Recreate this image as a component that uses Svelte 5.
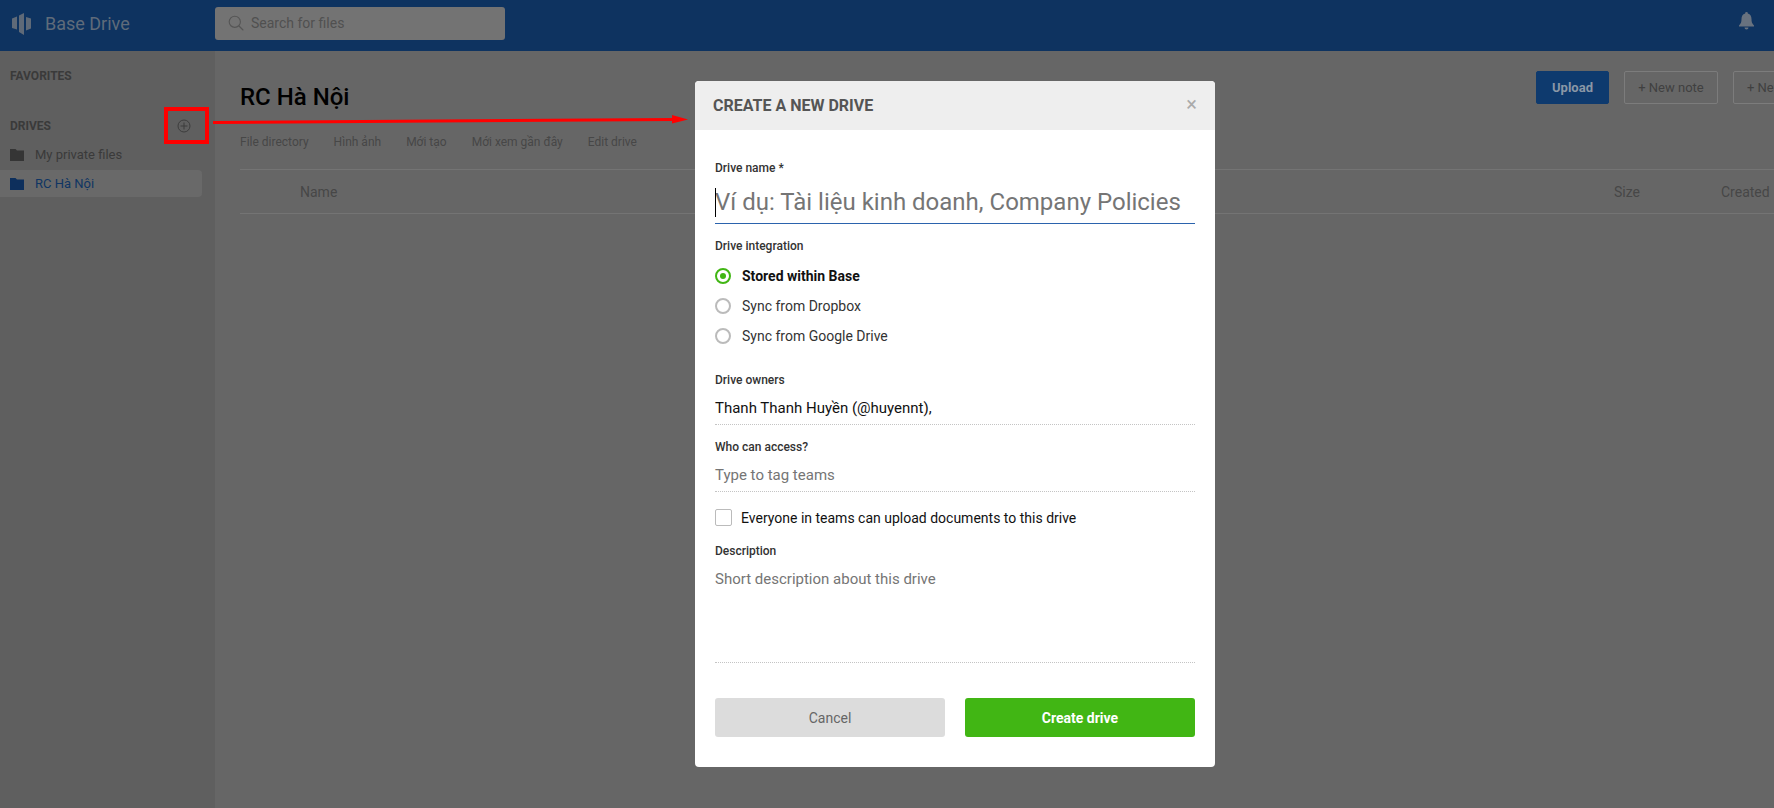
<script>
  const tabs = ['File directory', 'Hình ảnh', 'Mới tạo', 'Mới xem gần đây', 'Edit drive'];
  const radios = [
    { label: 'Stored within Base', on: true },
    { label: 'Sync from Dropbox', on: false },
    { label: 'Sync from Google Drive', on: false }
  ];
</script>

<div class="page">
  <header class="topbar">
    <div class="brand">
      <svg class="logo" width="19" height="22" viewBox="0 0 19 22" fill="#5f6a78">
        <path d="M0 5.500 5 3.500V16.500L0 15Z" />
        <path d="M7 2.500 12 0V22L7 19Z" />
        <path d="M14 4 19 5.500V15.500L14 17.500Z" />
      </svg>
      <span class="brand-name">Base Drive</span>
    </div>
    <div class="search">
      <svg width="16" height="16" viewBox="0 0 16 16" fill="none" stroke="#555" stroke-width="1.100">
        <circle cx="6.800" cy="6.800" r="5.600" />
        <path d="M11 11l4 4" stroke-linecap="round" />
      </svg>
      <span>Search for files</span>
    </div>
    <svg class="bell" width="15" height="18" viewBox="0 0 15 18" fill="#68727f">
      <path d="M7.500 0a1.300 1.300 0 0 1 1.300 1.500C11.500 2.200 12.500 4.400 12.500 7c0 3 .6 4.600 2.500 6.500v1H0v-1C1.900 11.600 2.500 10 2.500 7c0-2.600 1-4.800 3.700-5.500A1.300 1.300 0 0 1 7.500 0Z" />
      <path d="M5.500 15.500h4a2 2 0 0 1-4 0Z" />
    </svg>
  </header>

  <div class="body">
    <aside class="sidebar">
      <div class="section favorites">FAVORITES</div>
      <div class="section drives">
        <span>DRIVES</span>
        <svg width="14" height="14" viewBox="0 0 14 14" fill="none" stroke="#3d3d3d" stroke-width="1">
          <circle cx="7" cy="7" r="6" />
          <path d="M7 3.500v7M3.500 7h7" />
        </svg>
      </div>
      <div class="drive">
        <svg width="14" height="12" viewBox="0 0 14 12" fill="#353535"><path d="M0 0h5.500l1.500 1.500h7V12H0Z" /></svg>
        <span>My private files</span>
      </div>
      <div class="drive active">
        <svg width="14" height="12" viewBox="0 0 14 12" fill="#0d2f5c"><path d="M0 0h5.500l1.500 1.500h7V12H0Z" /></svg>
        <span>RC Hà Nội</span>
      </div>
    </aside>

    <main class="content">
      <div class="title-row">
        <h1>RC Hà Nội</h1>
        <div class="actions">
          <button class="upload">Upload</button>
          <button class="ghost">+ New note</button>
          <button class="ghost">+ New folder</button>
        </div>
      </div>
      <nav class="tabs">
        {#each tabs as tab}<span>{tab}</span>{/each}
      </nav>
      <div class="table-head">
        <span class="col-name">Name</span>
        <span class="col-size">Size</span>
        <span class="col-created">Created</span>
      </div>
    </main>
  </div>

  <section class="modal">
    <div class="modal-head">
      <h2>CREATE A NEW DRIVE</h2>
      <span class="close">×</span>
    </div>
    <form class="modal-body">
      <div class="label first">Drive name *</div>
      <div class="name-input"><i class="caret"></i><span>Ví dụ: Tài liệu kinh doanh, Company Policies</span></div>

      <div class="label integ">Drive integration</div>
      <div class="radios">
        {#each radios as r}
          <div class="radio" class:on={r.on}><i></i><span>{r.label}</span></div>
        {/each}
      </div>

      <div class="label owners">Drive owners</div>
      <div class="field value">Thanh Thanh Huyền (@huyennt),</div>

      <div class="label access">Who can access?</div>
      <div class="field ph tag">Type to tag teams</div>

      <div class="check"><i></i><span>Everyone in teams can upload documents to this drive</span></div>

      <div class="label desc">Description</div>
      <div class="field ph area">Short description about this drive</div>

      <div class="buttons">
        <button type="button" class="cancel">Cancel</button>
        <button type="button" class="create">Create drive</button>
      </div>
    </form>
  </section>

  <div class="red-box"></div>
  <svg class="arrow" width="480" height="14" viewBox="0 0 480 14">
    <path d="M0 9.500 462 6.500" stroke="#f00" stroke-width="3" fill="none" />
    <path d="M459 2 475 6.500 459 10.500Z" fill="#f00" />
  </svg>
</div>

<style>
  :global(body) { margin: 0; background: #666; }
  .page {
    position: relative;
    width: 1774px;
    height: 808px;
    overflow: hidden;
    background: #666;
    font-family: Roboto, "Noto Sans", sans-serif;
    color: #444;
  }
  .topbar {
    height: 51px;
    box-sizing: border-box;
    padding-bottom: 4px;
    background: #0e3360;
    display: flex;
    align-items: center;
  }
  .brand { width: 215px; display: flex; align-items: center; padding-left: 12px; box-sizing: border-box; }
  .logo { margin-right: 14px; }
  .brand-name { font-size: 18px; color: #5f6b7a; margin-top: -1px; }
  .search {
    width: 290px;
    height: 33px;
    background: #737373;
    border-radius: 3px;
    display: flex;
    align-items: center;
    gap: 7px;
    padding: 0 0 2px 13px;
    box-sizing: border-box;
    font-size: 14px;
    color: #505050;
  }
  .bell { margin-left: auto; margin-right: 20px; margin-top: -6px; }

  .body { display: flex; height: 757px; }
  .sidebar { width: 215px; flex: none; background: #5f5f5f; }
  .section { font-size: 12px; font-weight: 700; color: #3a3a3a; padding-left: 10px; line-height: 14px; }
  .favorites { padding-top: 18px; }
  .drives { display: flex; align-items: center; justify-content: space-between; margin-top: 36px; padding-right: 24px; }
  .drive {
    display: flex;
    align-items: center;
    height: 27px;
    width: 202px;
    padding-left: 10px;
    box-sizing: border-box;
    font-size: 13px;
    color: #3a3a3a;
    gap: 11px;
    border-radius: 0 4px 4px 0;
  }
  .drives + .drive { margin-top: 8px; margin-bottom: 2px; }
  .drive.active { background: #696969; color: #0f3563; }

  .content { flex: 1; min-width: 0; overflow: hidden; padding-left: 25px; }
  .title-row { display: flex; justify-content: space-between; padding-top: 20px; height: 58px; box-sizing: content-box; }
  h1 { margin: 12px 0 0; font-size: 24px; font-weight: 500; color: #000; line-height: 28px; }
  .actions { display: flex; gap: 15px; flex: none; margin-right: -66px; }
  .actions button { height: 33px; border-radius: 2px; font: inherit; font-size: 13px; box-sizing: border-box; }
  .upload { width: 73px; background: #0e3a6e; border: 1px solid #0e3a6e; color: #8a97a6; font-weight: 700 !important; }
  .ghost { width: 94px; background: transparent; border: 1px solid #7c7c7c; color: #404040; white-space: nowrap; }
  .ghost + .ghost { width: 107px; text-align: left; padding-left: 13px; }
  .tabs { display: flex; gap: 25px; font-size: 12px; color: #474747; height: 35px; margin-top: 5px; }
  .tabs span { line-height: 16px; padding-top: 0; }
  .table-head {
    position: relative;
    display: flex;
    align-items: center;
    height: 43px;
    border-top: 1px solid #747474;
    border-bottom: 1px solid #747474;
    font-size: 14px;
    color: #474747;
    margin-right: -100px;
    padding-left: 60px;
  }
  .col-name { flex: 1; }
  .col-size { width: 107px; }
  .col-created { width: 153px; }

  .modal {
    position: absolute;
    left: 695px;
    top: 81px;
    width: 520px;
    height: 686px;
    background: #fff;
    border-radius: 4px;
    overflow: hidden;
  }
  .modal-head {
    height: 49px;
    background: #eee;
    display: flex;
    align-items: center;
    justify-content: space-between;
    padding: 0 18px;
  }
  h2 { margin: 0; font-size: 16px; font-weight: 700; color: #555; }
  .close { font-size: 20px; color: #aaa; line-height: 20px; margin-top: -3px; }
  .modal-body { padding: 0 20px; }
  .label { font-size: 12px; line-height: 14px; font-weight: 500; color: #333; }
  .first { margin-top: 31px; }
  .name-input {
    position: relative;
    height: 39px;
    margin-top: 6px;
    padding-top: 3px;
    border-bottom: 1px solid #2b63ad;
    font-size: 24px;
    line-height: 36px;
    color: #757575;
    white-space: nowrap;
  }
  .caret { position: absolute; left: 0; top: 7px; width: 1px; height: 29px; background: #000; }
  .integ { margin-top: 15px; }
  .radios { margin-top: 8px; }
  .radio { display: flex; align-items: center; height: 30px; font-size: 14px; color: #333; gap: 11px; }
  .radio i {
    width: 16px; height: 16px; box-sizing: border-box;
    border: 2px solid #bbb; border-radius: 50%;
    display: block; position: relative;
  }
  .radio.on { font-weight: 700; color: #111; }
  .radio.on i { border-color: #41b614; }
  .radio.on i::after {
    content: ''; position: absolute; left: 3px; top: 3px;
    width: 6px; height: 6px; border-radius: 50%; background: #41b614;
  }
  .owners { margin-top: 22px; }
  .field {
    font-size: 15px;
    line-height: 20px;
    margin-top: 10px;
    height: 28px;
    padding-top: 1px;
    box-sizing: border-box;
    border-bottom: 1px dotted #c4c4c4;
  }
  .value { color: #111; }
  .ph { color: #757575; }
  .tag { margin-top: 10px; }
  .access { margin-top: 15px; }
  .check { display: flex; align-items: center; gap: 9px; margin-top: 17px; font-size: 14px; color: #111; }
  .check i { width: 17px; height: 17px; box-sizing: border-box; border: 1px solid #bbb; border-radius: 2px; display: block; }
  .desc { margin-top: 18px; }
  .area { height: 95px; margin-top: 10px; }
  .buttons { display: flex; gap: 20px; margin-top: 35px; }
  .buttons button {
    flex: 1; height: 39px; border: 0; border-radius: 3px;
    font: inherit; font-size: 14px;
  }
  .cancel { background: #dcdcdc; color: #666; }
  .create { background: #41b614; color: #fff; font-weight: 700 !important; }

  .red-box {
    position: absolute;
    left: 164px; top: 107px;
    width: 45px; height: 37px;
    box-sizing: border-box;
    border: 4px solid #f00;
  }
  .arrow { position: absolute; left: 213px; top: 113px; }
</style>
